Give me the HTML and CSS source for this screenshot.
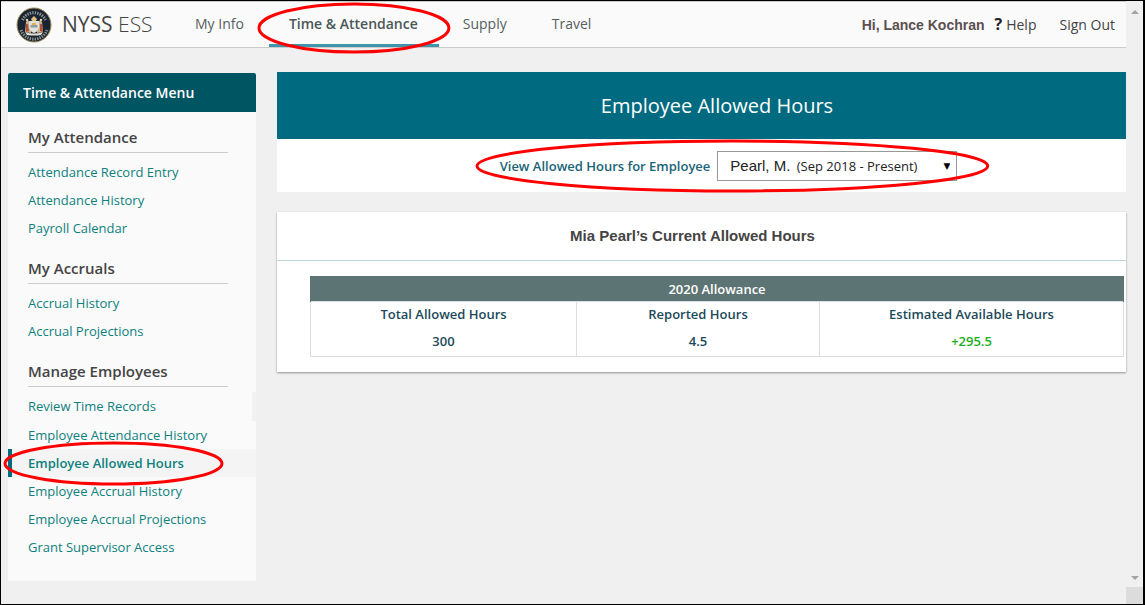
FILE: index.html
```html
<!DOCTYPE html>
<html lang="en">
<head>
<meta charset="utf-8">
<title>NYSS ESS - Employee Allowed Hours</title>
<link rel="stylesheet" href="styles.css">
</head>
<body>
<div class="page">
  <header class="topbar">
    <svg class="seal" viewBox="0 0 36 36" aria-hidden="true">
      <circle cx="18" cy="18" r="17" fill="#182431" stroke="#a58b57" stroke-width="1"/>
      <path d="M6.5 13A12.7 12.7 0 0 1 29.5 13" fill="none" stroke="#d8d8d0" stroke-width="3" stroke-dasharray="1.4 1.1" opacity=".6"/>
      <path d="M5 23A13.8 13.8 0 0 0 31 23" fill="none" stroke="#d8d8d0" stroke-width="3" stroke-dasharray="1.4 1.1" opacity=".6"/>
      <path d="M9 25l1-10 2-2 3 5v8z" fill="#cfb08d"/>
      <path d="M27 25l-1-10-2-2-3 5v8z" fill="#cfb08d"/>
      <path d="M10 17h2l1 7-3 1zM24 17h2l1 8-3-1z" fill="#b0503a"/>
      <path d="M13 14h10v6q-1 5-5 6-4-1-5-6z" fill="#dfe2dc"/>
      <path d="M14.500 18h7v2.500h-7z" fill="#8a9da3"/>
      <path d="M16 16h4v2h-4z" fill="#e1ae4e"/>
      <path d="M15 12l3-3 3 3-1 2h-4z" fill="#dfbd7c"/>
      <path d="M9 25q9 3 18 0l-2 3q-7 1-14 0z" fill="#e7dfd0"/>
      <circle cx="11" cy="13" r="1.200" fill="#f0d1b0"/>
      <circle cx="25" cy="13" r="1.200" fill="#f0d1b0"/>
    </svg>
    <div class="brand">NYSS <span class="brand-light">ESS</span></div>
    <nav class="tabs" aria-label="Main">
      <a class="tab" href="#">My Info</a>
      <a class="tab tab-active" href="#">Time &amp; Attendance<span class="ring ring-tab"><svg><ellipse cx="50%" cy="50%"/></svg></span></a>
      <a class="tab" href="#">Supply</a>
      <a class="tab tab-travel" href="#">Travel</a>
    </nav>
    <div class="account">
      <span class="greeting">Hi, Lance Kochran</span>
      <a class="account-link" href="#"><b class="mark">?</b>Help</a>
      <a class="account-link sign-out" href="#">Sign Out</a>
    </div>
  </header>
  <div class="columns">
    <nav class="side" aria-label="Time and attendance">
      <h2 class="side-title">Time &amp; Attendance Menu</h2>
      <div class="side-body">
        <h3 class="group">My Attendance</h3>
        <ul class="links">
          <li><a class="link" href="#">Attendance Record Entry</a></li>
          <li><a class="link" href="#">Attendance History</a></li>
          <li><a class="link" href="#">Payroll Calendar</a></li>
        </ul>
        <h3 class="group">My Accruals</h3>
        <ul class="links">
          <li><a class="link" href="#">Accrual History</a></li>
          <li><a class="link" href="#">Accrual Projections</a></li>
        </ul>
        <h3 class="group">Manage Employees</h3>
        <ul class="links">
          <li><a class="link link-notched" href="#">Review Time Records</a></li>
          <li><a class="link" href="#">Employee Attendance History</a></li>
          <li><a class="link link-active" href="#">Employee Allowed Hours<span class="ring ring-link"><svg><ellipse cx="50%" cy="50%"/></svg></span></a></li>
          <li><a class="link" href="#">Employee Accrual History</a></li>
          <li><a class="link" href="#">Employee Accrual Projections</a></li>
          <li><a class="link" href="#">Grant Supervisor Access</a></li>
        </ul>
      </div>
    </nav>
    <main class="content">
      <h1 class="title">Employee Allowed Hours</h1>
      <div class="filter">
        <div class="picker">
          <label class="picker-label" for="employee">View Allowed Hours for Employee</label>
          <select class="employee" id="employee">
            <button><selectedcontent></selectedcontent></button>
            <option selected><span class="name">Pearl, M.</span> <span class="dates">(Sep 2018 - Present)</span></option>
          </select>
          <span class="ring ring-filter"><svg><ellipse cx="50%" cy="50%"/></svg></span>
        </div>
      </div>
      <section class="card">
        <h2 class="card-title">Mia Pearl’s Current Allowed Hours</h2>
        <div class="card-body">
          <table class="allowance">
            <colgroup><col class="col-total"><col class="col-reported"><col></colgroup>
            <thead>
              <tr><th class="year" colspan="3">2020 Allowance</th></tr>
              <tr><th>Total Allowed Hours</th><th>Reported Hours</th><th>Estimated Available Hours</th></tr>
            </thead>
            <tbody>
              <tr><td>300</td><td>4.5</td><td class="positive">+295.5</td></tr>
            </tbody>
          </table>
        </div>
      </section>
    </main>
  </div>
</div>
<div class="scroll" aria-hidden="true">
  <svg class="arrow" viewBox="0 0 8 4"><path d="M0 4L4 0L8 4z"/></svg>
  <svg class="arrow arrow-down" viewBox="0 0 8 4"><path d="M0 0L4 4L8 0z"/></svg>
  <span class="corner"></span>
</div>
</body>
</html>
```

FILE: styles.css
```css
* { box-sizing: border-box; }
body {
  margin: 0;
  min-height: 100vh;
  display: flex;
  border: 1px solid #000;
  border-right-width: 2px;
  background: #f0f0f0;
  font: 13px/20px "Open Sans", sans-serif;
  color: #333;
}
h1, h2, h3, ul { margin: 0; padding: 0; }
ul { list-style: none; }
a { color: inherit; text-decoration: none; }
.page { flex: 1; min-width: 0; }

.ring { position: absolute; z-index: 2; pointer-events: none; }
.ring svg { display: block; width: 100%; height: 100%; overflow: visible; }
.ring ellipse {
  rx: calc(50% - 1px);
  ry: calc(50% - 1px);
  fill: none;
  stroke: #f00;
  stroke-width: 3px;
}

.topbar {
  display: flex;
  align-items: center;
  height: 47px;
  padding: 0 11px 0 15px;
  background: #fafafa;
  border-top: 1px solid #ccc;
  border-bottom: 1px solid #ccc;
}
.seal { width: 36px; height: 36px; }
.brand { width: 119px; margin-left: 10px; font-size: 21px; line-height: 45px; white-space: nowrap; color: #444; }
.brand-light { font-weight: 300; }
.tabs { display: flex; align-self: stretch; font-size: 14px; color: #555f5f; }
.tab { padding: 0 25px 0 14px; line-height: 43px; white-space: nowrap; }
.tab-active {
  position: relative;
  margin-right: 10px;
  padding: 0 21px 0 20px;
  border-bottom: 3px solid #3f96aa;
  font-weight: 600;
  color: #4a5757;
}
.ring-tab { inset: 1px -11px -9px; }
.tab-travel { padding-left: 20px; }
.account { display: flex; align-items: center; margin-left: auto; font-size: 14px; color: #444; white-space: nowrap; }
.greeting { margin-right: 10px; font: bold 14px/20px "Liberation Sans", Arial, sans-serif; color: #5a5050; }
.mark { margin-right: 4px; font-size: 16px; color: #222; }
.sign-out { margin-left: 23px; }

.columns { display: flex; align-items: flex-start; gap: 21px; padding: 24px 0 20px 7px; }
.side { flex: none; width: 248px; margin-top: 1px; background: #fafafa; }
.side-title {
  padding: 0 15px;
  border-radius: 2px 2px 0 0;
  background: #005563;
  font-size: 14px;
  font-weight: 600;
  line-height: 39px;
  color: #fff;
}
.side-body { padding: 14px 0 5px; }
.group {
  margin: 0 28px 5px 20px;
  padding-bottom: 3px;
  border-bottom: 1px solid #ccc;
  font-size: 15px;
  font-weight: 600;
  line-height: 23px;
  color: #444;
}
.links { padding-bottom: 15px; }
.link { display: block; padding: 0 20px; line-height: 28px; color: #0d817d; }
.link-notched { border-right: 4px solid #f2f2f2; line-height: 29px; }
.link-active {
  position: relative;
  padding-left: 16px;
  border-left: 4px solid #006b80;
  background: #f4f4f4;
  font-weight: 600;
}
.ring-link { inset: -7px 33px -8px -8px; }

.content { flex: 1; min-width: 0; }
.title {
  padding-left: 31px;
  background: #006b80;
  font-size: 20px;
  font-weight: 400;
  line-height: 67px;
  text-align: center;
  color: #fff;
}
.filter { display: flex; justify-content: center; background: #fff; }
.picker { position: relative; display: flex; align-items: center; gap: 7px; margin: 12px 0 11px 54px; }
.picker-label { font-weight: 600; color: #1a6478; }
.employee {
  appearance: none;
  appearance: base-select;
  display: flex;
  align-items: center;
  width: 240px;
  height: 30px;
  min-height: 0;
  padding: 0 6px 0 12px;
  border: 1px solid #999;
  border-radius: 0;
  background: #fff;
  font: 13px/20px "Open Sans", sans-serif;
  color: #222;
}
.employee::picker-icon { content: "▼"; font: 9px/20px "DejaVu Sans", sans-serif; color: #000; }
.name { margin-right: 3px; font: 15px/20px "Liberation Sans", Arial, sans-serif; }
.ring-filter { inset: -11px -31px -11px -24px; }

.card { margin-top: 20px; background: #fff; box-shadow: 0 1px 2px rgba(0, 0, 0, .4); }
.card-title {
  border-bottom: 1px solid #bcd8de;
  font: bold 15px/48px "Liberation Sans", Arial, sans-serif;
  text-align: center;
  padding-right: 18px;
  color: #444;
}
.card-body { padding: 15px 2px 15px 33px; }
.allowance { width: 100%; table-layout: fixed; border-collapse: collapse; font-weight: 600; text-align: center; color: #1b4a5a; }
.col-total { width: 266px; }
.col-reported { width: 243px; }
.allowance th, .allowance td { padding: 3px 0 4px; border: 1px solid #ddd; font-weight: 600; line-height: 20px; }
.allowance th { padding-top: 2px; border-bottom: 0; }
.allowance td { padding-bottom: 5px; border-top: 0; }
.allowance .year { padding: 2px 0; border-color: #5d7474; background: #5d7474; color: #fff; }
.allowance .positive { color: #1cae1c; }

.scroll { display: flex; flex-direction: column; align-items: center; width: 17px; padding-top: 9px; }
.arrow { width: 8px; height: 4px; fill: #a3a3a3; }
.arrow-down { margin: auto 0 7px; }
.corner { width: 17px; height: 17px; background: #dcdcdc; }
```
